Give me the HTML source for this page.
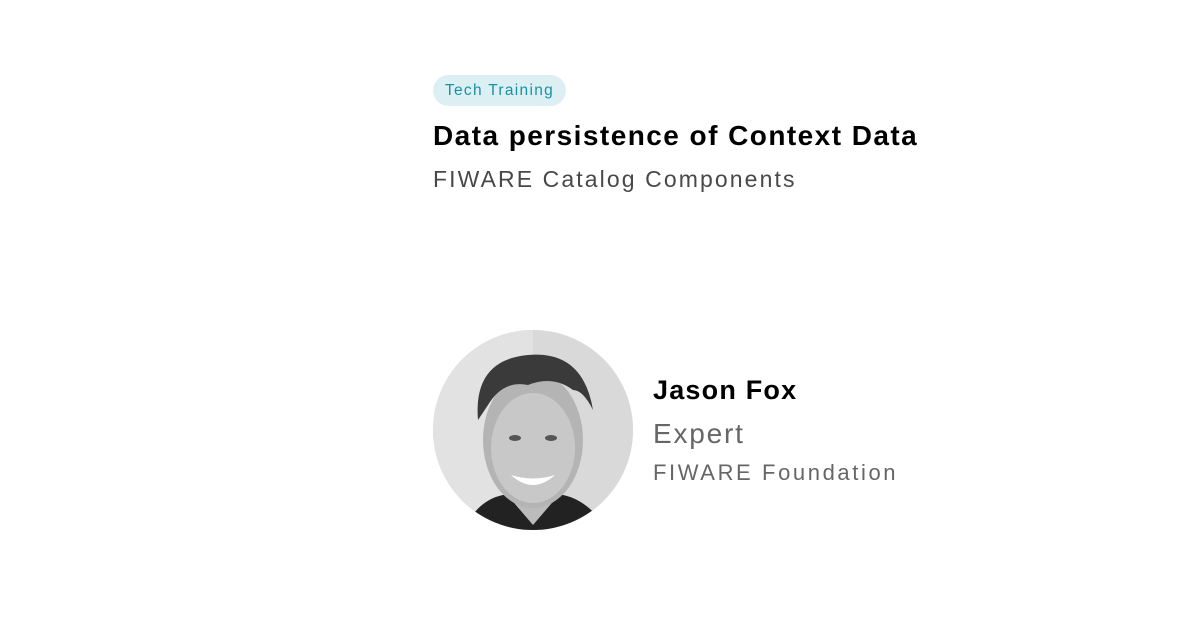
<!DOCTYPE html>
<html><head><style>
body{margin:0;width:1200px;height:627px;background:#fff;font-family:"Liberation Sans",sans-serif;position:relative;overflow:hidden}
.a{position:absolute;white-space:nowrap}
.badge{left:433px;top:75px;width:133px;height:31px;border-radius:16px;background:#dcf0f3;color:#1890a6;font-size:15.5px;line-height:31px;text-align:center;letter-spacing:1.3px}
.t{left:433px;top:120px;font-size:28px;font-weight:bold;color:#000;letter-spacing:1.45px}
.s{left:433px;top:166px;font-size:23px;color:#484848;letter-spacing:2.1px}
.n{left:653px;top:375px;font-size:27px;font-weight:bold;color:#000;letter-spacing:1.2px}
.e{left:653px;top:418px;font-size:28px;color:#666;letter-spacing:1.8px}
.f{left:653px;top:460px;font-size:22px;color:#666;letter-spacing:2.6px}
.ph{left:433px;top:330px;width:200px;height:200px;border-radius:50%;overflow:hidden;background:#dcdcdc}
</style></head><body>
<div class="a badge">Tech Training</div>
<div class="a t">Data persistence of Context Data</div>
<div class="a s">FIWARE Catalog Components</div>
<div class="a ph"><svg width="200" height="200">
<rect width="200" height="200" fill="#d9d9d9"/>
<path d="M20 0 H100 V200 H0 V0Z" fill="#e2e2e2"/>
<path d="M30 200 Q45 170 70 165 L130 165 Q155 170 175 200Z" fill="#222"/>
<path d="M70 160 L100 195 L130 160Z" fill="#bbb"/>
<ellipse cx="100" cy="110" rx="50" ry="68" fill="#b4b4b4"/>
<ellipse cx="100" cy="118" rx="42" ry="55" fill="#c8c8c8"/>
<path d="M45 90 Q40 30 95 25 Q150 20 160 80 Q150 60 140 60 Q120 45 95 55 Q70 50 55 75 Z" fill="#3a3a3a"/>
<path d="M78 145 Q100 165 122 145 Q100 152 78 145Z" fill="#fff"/>
<ellipse cx="82" cy="108" rx="6" ry="3" fill="#555"/>
<ellipse cx="118" cy="108" rx="6" ry="3" fill="#555"/>
</svg></div>
<div class="a n">Jason Fox</div>
<div class="a e">Expert</div>
<div class="a f">FIWARE Foundation</div>
</body></html>
